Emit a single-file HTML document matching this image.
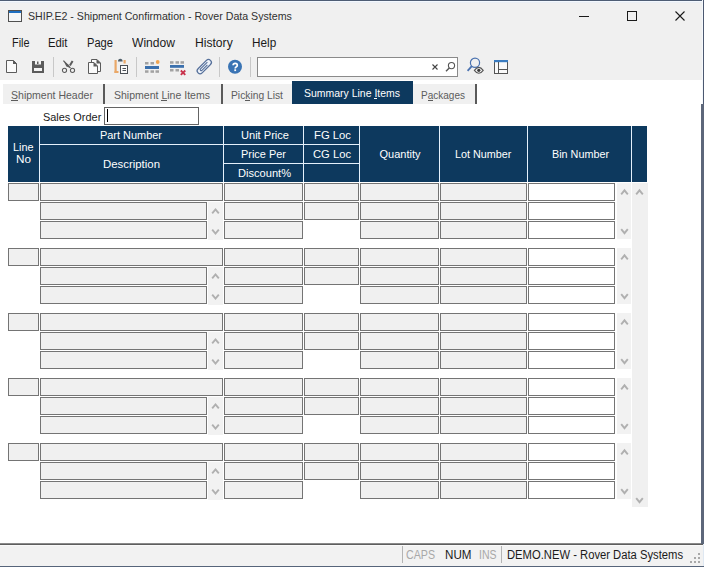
<!DOCTYPE html>
<html><head><meta charset="utf-8"><style>
html,body{margin:0;padding:0;}
body{width:704px;height:567px;position:relative;overflow:hidden;background:#fff;font-family:"Liberation Sans",sans-serif;}
.a{position:absolute;box-sizing:border-box;}
.t{position:absolute;white-space:nowrap;transform-origin:0 0;}
svg.a{overflow:visible;}
</style></head><body>
<div class="a" style="left:0px;top:0px;width:704px;height:80px;background:#f0f0f0;"></div>
<div class="a" style="left:0px;top:0px;width:704px;height:1px;background:#4e5d74;"></div>
<div class="a" style="left:0px;top:1px;width:704px;height:1px;background:#f3f8fe;"></div>
<div class="a" style="left:0px;top:2px;width:704px;height:1px;background:#eaeef4;"></div>
<svg class="a" style="left:8px;top:10px" width="15" height="13" viewBox="0 0 15 13"><rect x="0.5" y="0.5" width="13" height="11" fill="#f4f6f8" stroke="#505050" stroke-width="1"/><rect x="1" y="1" width="12" height="2" fill="#1d6fc2"/></svg>
<div class="t" style="left:28.00px;top:10.04px;font-size:11px;line-height:12.64px;color:#303030;transform:scaleX(0.9663);">SHIP.E2 - Shipment Confirmation - Rover Data Systems</div>
<div class="a" style="left:579px;top:16px;width:10px;height:1px;background:#1a1a1a;"></div>
<div class="a" style="left:627px;top:11px;width:10px;height:10px;box-shadow:inset 0 0 0 1px #1a1a1a;"></div>
<svg class="a" style="left:675px;top:11px" width="10" height="10" viewBox="0 0 10 10"><path d="M0.5 0.5L9.5 9.5M9.5 0.5L0.5 9.5" stroke="#1a1a1a" stroke-width="1.1"/></svg>
<div class="t" style="left:11.50px;top:37.14px;font-size:12px;line-height:13.79px;color:#1a1a1a;transform:scaleX(0.9047);">File</div>
<div class="t" style="left:48.00px;top:37.14px;font-size:12px;line-height:13.79px;color:#1a1a1a;transform:scaleX(0.9433);">Edit</div>
<div class="t" style="left:87.00px;top:37.14px;font-size:12px;line-height:13.79px;color:#1a1a1a;transform:scaleX(0.9281);">Page</div>
<div class="t" style="left:132.00px;top:37.14px;font-size:12px;line-height:13.79px;color:#1a1a1a;transform:scaleX(1.0073);">Window</div>
<div class="t" style="left:195.00px;top:37.14px;font-size:12px;line-height:13.79px;color:#1a1a1a;transform:scaleX(1.0095);">History</div>
<div class="t" style="left:251.80px;top:37.14px;font-size:12px;line-height:13.79px;color:#1a1a1a;transform:scaleX(0.9803);">Help</div>
<div class="a" style="left:53px;top:57px;width:1px;height:20px;background:#c8c8c8;"></div>
<div class="a" style="left:136px;top:57px;width:1px;height:20px;background:#c8c8c8;"></div>
<div class="a" style="left:219px;top:57px;width:1px;height:20px;background:#c8c8c8;"></div>
<div class="a" style="left:250px;top:57px;width:1px;height:20px;background:#c8c8c8;"></div>
<div class="a" style="left:257px;top:57px;width:201px;height:20px;background:#fff;box-shadow:inset 0 0 0 1px #8a8a8a;"></div>
<svg class="a" style="left:5px;top:59px" width="14" height="15" viewBox="0 0 14 15"><path d="M1.5 1.5H8.5L11.5 4.5V13.5H1.5Z" fill="#fafafa" stroke="#5b5b5b" stroke-width="1"/><path d="M8 1V5H12Z" fill="#5b5b5b"/></svg>
<svg class="a" style="left:32px;top:60px" width="13" height="14" viewBox="0 0 13 14"><path d="M0 1H12V13H0Z" fill="#5b5b5b"/><rect x="3" y="1" width="6" height="3.5" fill="#f4f4f4"/><rect x="5" y="1.5" width="1.5" height="2.5" fill="#5b5b5b"/><rect x="2" y="8" width="8" height="3" fill="#f4f4f4"/></svg>
<svg class="a" style="left:58px;top:56px" width="22" height="20" viewBox="0 0 22 20"><path d="M5.4 4.6L12.4 11.9" stroke="#5b5b5b" stroke-width="1.3"/><path d="M6 5.8L10.2 8.6L12.3 12L8.4 10.6Z" fill="#5b5b5b"/><path d="M14.6 5.1L11.9 9.6" stroke="#5b5b5b" stroke-width="2"/><circle cx="6.5" cy="14.3" r="2.1" fill="none" stroke="#5b5b5b" stroke-width="1.05"/><circle cx="14.5" cy="14.3" r="2.1" fill="none" stroke="#5b5b5b" stroke-width="1.05"/></svg>
<svg class="a" style="left:87px;top:58px" width="15" height="17" viewBox="0 0 15 17"><path d="M4.5 1.5H10L13.5 5V13.5H4.5Z" fill="#fafafa" stroke="#5b5b5b" stroke-width="1"/><path d="M9.5 1V5.5H14Z" fill="#5b5b5b"/><path d="M1.5 4.5H7L10.5 8V15.5H1.5Z" fill="#fafafa" stroke="#5b5b5b" stroke-width="1"/><path d="M6.5 4V8.5H11Z" fill="#5b5b5b"/></svg>
<svg class="a" style="left:113px;top:58px" width="16" height="17" viewBox="0 0 16 17"><rect x="1.5" y="2" width="2.2" height="13" fill="#eaa868"/><rect x="1.5" y="13" width="4" height="2" fill="#eaa868"/><rect x="10.5" y="2" width="2.2" height="3.5" fill="#eaa868"/><path d="M5 3.5Q5 0.8 7.3 0.8Q9.6 0.8 9.6 3.5Z" fill="#4f5f6a"/><rect x="7.5" y="7.5" width="7" height="8" fill="#fafafa" stroke="#4a4f55" stroke-width="1"/><rect x="9.5" y="10" width="3.5" height="1" fill="#4a4f55"/><rect x="9.5" y="12" width="3.5" height="1" fill="#4a4f55"/></svg>
<svg class="a" style="left:144px;top:60px" width="17" height="14" viewBox="0 0 17 14"><rect x="1" y="2" width="3.5" height="2.5" fill="#a2a2a2"/><rect x="6.5" y="2" width="3.5" height="2.5" fill="#a2a2a2"/><circle cx="13.7" cy="2" r="1.9" fill="#f0a552"/><rect x="1" y="6" width="14" height="3" fill="#3b70ad"/><rect x="1" y="10.3" width="3.5" height="2.5" fill="#a2a2a2"/><rect x="6.5" y="10.3" width="3.5" height="2.5" fill="#a2a2a2"/><rect x="11.5" y="10.3" width="3.5" height="2.5" fill="#a2a2a2"/></svg>
<svg class="a" style="left:169px;top:60px" width="18" height="16" viewBox="0 0 18 16"><rect x="1" y="1.2" width="3.5" height="2.5" fill="#a2a2a2"/><rect x="6.5" y="1.2" width="3.5" height="2.5" fill="#a2a2a2"/><rect x="11.5" y="1.2" width="3.5" height="2.5" fill="#a2a2a2"/><rect x="1" y="5" width="14" height="2.8" fill="#3b70ad"/><rect x="1" y="9" width="3.5" height="2.5" fill="#a2a2a2"/><rect x="6.5" y="9" width="3.5" height="2.5" fill="#a2a2a2"/><path d="M11.8 10.5L16.3 14.8M16.3 10.5L11.8 14.8" stroke="#c8304a" stroke-width="1.8"/></svg>
<svg class="a" style="left:192px;top:56px" width="24" height="22" viewBox="0 0 24 22"><g transform="translate(12.2,10.7) rotate(-45)"><path d="M-5.8 2.9H6A2.9 2.9 0 0 0 6 -2.9H-5.8A2.9 2.9 0 0 0 -5.8 2.9Z" fill="#eef3fa" stroke="#56709a" stroke-width="1.25"/><path d="M5.5 -1H-4.2A1 1 0 0 0 -4.2 1H3.5" fill="none" stroke="#56709a" stroke-width="1.1"/></g></svg>
<svg class="a" style="left:227px;top:59px" width="16" height="16" viewBox="0 0 16 16"><circle cx="8" cy="7.8" r="7" fill="#3a74b4"/><path d="M6.1 6.2Q6.1 4.4 8.2 4.4Q10.3 4.4 10.3 6.2Q10.3 7.3 9.1 7.9Q8.2 8.4 8.2 9.6" fill="none" stroke="#fff" stroke-width="1.7"/><rect x="7.3" y="10.3" width="1.8" height="1.8" fill="#fff"/></svg>
<svg class="a" style="left:429px;top:61px" width="12" height="12" viewBox="0 0 12 12"><path d="M3.5 3.5L8.5 8.5M8.5 3.5L3.5 8.5" stroke="#444" stroke-width="1.1"/></svg>
<svg class="a" style="left:444px;top:61px" width="12" height="12" viewBox="0 0 12 12"><circle cx="7.5" cy="4.6" r="3.1" fill="none" stroke="#555" stroke-width="1.1"/><path d="M5.3 6.9L2 10.3" stroke="#555" stroke-width="1.4"/></svg>
<svg class="a" style="left:465px;top:57px" width="20" height="18" viewBox="0 0 20 18"><circle cx="10" cy="5.8" r="4.6" fill="none" stroke="#4a72b0" stroke-width="1.2"/><path d="M6.8 9.2L2.6 13.8" stroke="#4a72b0" stroke-width="1.8"/><path d="M9.4 13.3Q13.8 7.4 18.2 13.3Q13.8 19.2 9.4 13.3Z" fill="#f4f4f4" stroke="#555" stroke-width="1.1"/><circle cx="13.8" cy="13.3" r="1.6" fill="#3a3a3a"/></svg>
<svg class="a" style="left:493px;top:59px" width="16" height="16" viewBox="0 0 16 16"><rect x="1.5" y="1.5" width="13" height="13" fill="#fafafa" stroke="#555" stroke-width="1"/><rect x="1" y="1" width="14" height="2.2" fill="#3b7cc0"/><path d="M5.5 3V14.5M5.5 10.5H14.5" stroke="#555" stroke-width="1"/></svg>
<div class="a" style="left:0px;top:80px;width:703px;height:463px;background:#fff;"></div>
<div class="a" style="left:3px;top:84px;width:100px;height:20px;background:#f0f0f0;"></div>
<div class="t" style="left:11.00px;top:89.05px;font-size:11px;line-height:12.64px;color:#5c5c5c;transform:scaleX(0.9573);">Shipment Header</div>
<div class="a" style="left:11.00px;top:100px;width:7.03px;height:1px;background:#5c5c5c"></div>
<div class="a" style="left:105px;top:84px;width:116px;height:20px;background:#f0f0f0;"></div>
<div class="t" style="left:114.00px;top:89.05px;font-size:11px;line-height:12.64px;color:#5c5c5c;transform:scaleX(0.9567);">Shipment Line Items</div>
<div class="a" style="left:161.42px;top:100px;width:5.86px;height:1px;background:#5c5c5c"></div>
<div class="a" style="left:223px;top:84px;width:69px;height:20px;background:#f0f0f0;"></div>
<div class="t" style="left:231.00px;top:89.05px;font-size:11px;line-height:12.64px;color:#5c5c5c;transform:scaleX(0.9343);">Picking List</div>
<div class="a" style="left:245.28px;top:100px;width:5.14px;height:1px;background:#5c5c5c"></div>
<div class="a" style="left:413px;top:84px;width:63px;height:20px;background:#f0f0f0;"></div>
<div class="t" style="left:421.00px;top:89.05px;font-size:11px;line-height:12.64px;color:#5c5c5c;transform:scaleX(0.9101);">Packages</div>
<div class="a" style="left:427.68px;top:100px;width:5.57px;height:1px;background:#5c5c5c"></div>
<div class="a" style="left:103px;top:84px;width:2px;height:20px;background:#5a5a5a;"></div>
<div class="a" style="left:221px;top:84px;width:2px;height:20px;background:#5a5a5a;"></div>
<div class="a" style="left:475px;top:84px;width:2px;height:20px;background:#5a5a5a;"></div>
<div class="a" style="left:292px;top:81px;width:121px;height:23px;background:#0d395e;"></div>
<div class="t" style="left:303.50px;top:87.05px;font-size:11px;line-height:12.64px;color:#ffffff;transform:scaleX(0.9514);">Summary Line Items</div>
<div class="a" style="left:373.90px;top:98px;width:2.91px;height:1px;background:#ffffff"></div>
<div class="t" style="left:42.50px;top:111.05px;font-size:11px;line-height:12.64px;color:#1a1a1a;transform:scaleX(0.9929);">Sales Order</div>
<div class="a" style="left:104px;top:107px;width:95px;height:18px;background:#fff;box-shadow:inset 0 0 0 1px #646464;"></div>
<div class="a" style="left:107px;top:109px;width:1px;height:13px;background:#000;"></div>
<div class="a" style="left:8px;top:126px;width:639px;height:56px;background:#0d395e;"></div>
<div class="a" style="left:39px;top:126px;width:1px;height:56px;background:#e4f0fb;"></div>
<div class="a" style="left:223px;top:126px;width:1px;height:56px;background:#e4f0fb;"></div>
<div class="a" style="left:303px;top:126px;width:1px;height:56px;background:#e4f0fb;"></div>
<div class="a" style="left:359px;top:126px;width:1px;height:56px;background:#e4f0fb;"></div>
<div class="a" style="left:439px;top:126px;width:1px;height:56px;background:#e4f0fb;"></div>
<div class="a" style="left:527px;top:126px;width:1px;height:56px;background:#e4f0fb;"></div>
<div class="a" style="left:631px;top:126px;width:1px;height:56px;background:#e4f0fb;"></div>
<div class="a" style="left:40px;top:144px;width:263px;height:1px;background:#e4f0fb;"></div>
<div class="a" style="left:304px;top:144px;width:55px;height:1px;background:#e4f0fb;"></div>
<div class="a" style="left:224px;top:163px;width:79px;height:1px;background:#e4f0fb;"></div>
<div class="a" style="left:304px;top:163px;width:55px;height:1px;background:#e4f0fb;"></div>
<div class="t" style="left:13.45px;top:141.34px;font-size:11px;line-height:12.64px;color:#ffffff;transform:scaleX(0.9850);">Line</div>
<div class="t" style="left:16.00px;top:153.04px;font-size:11px;line-height:12.64px;color:#ffffff;transform:scaleX(1.0667);">No</div>
<div class="t" style="left:100.00px;top:129.04px;font-size:11px;line-height:12.64px;color:#ffffff;transform:scaleX(0.9940);">Part Number</div>
<div class="t" style="left:102.50px;top:158.04px;font-size:11px;line-height:12.64px;color:#ffffff;transform:scaleX(1.0358);">Description</div>
<div class="t" style="left:240.70px;top:129.04px;font-size:11px;line-height:12.64px;color:#ffffff;transform:scaleX(1.0066);">Unit Price</div>
<div class="t" style="left:241.30px;top:148.04px;font-size:11px;line-height:12.64px;color:#ffffff;transform:scaleX(0.9945);">Price Per</div>
<div class="t" style="left:237.50px;top:167.04px;font-size:11px;line-height:12.64px;color:#ffffff;transform:scaleX(1.0077);">Discount%</div>
<div class="t" style="left:314.10px;top:129.04px;font-size:11px;line-height:12.64px;color:#ffffff;transform:scaleX(1.0251);">FG Loc</div>
<div class="t" style="left:313.00px;top:148.04px;font-size:11px;line-height:12.64px;color:#ffffff;transform:scaleX(1.0184);">CG Loc</div>
<div class="t" style="left:379.50px;top:148.04px;font-size:11px;line-height:12.64px;color:#ffffff;">Quantity</div>
<div class="t" style="left:455.25px;top:148.04px;font-size:11px;line-height:12.64px;color:#ffffff;transform:scaleX(0.9826);">Lot Number</div>
<div class="t" style="left:551.50px;top:148.04px;font-size:11px;line-height:12.64px;color:#ffffff;transform:scaleX(0.9812);">Bin Number</div>
<div class="a" style="left:8px;top:183px;width:31px;height:18px;background:#f0f0f0;box-shadow:inset 0 0 0 1px #747474;"></div>
<div class="a" style="left:40px;top:183px;width:183px;height:18px;background:#f0f0f0;box-shadow:inset 0 0 0 1px #747474;"></div>
<div class="a" style="left:224px;top:183px;width:79px;height:18px;background:#f0f0f0;box-shadow:inset 0 0 0 1px #747474;"></div>
<div class="a" style="left:304px;top:183px;width:55px;height:18px;background:#f0f0f0;box-shadow:inset 0 0 0 1px #747474;"></div>
<div class="a" style="left:360px;top:183px;width:79px;height:18px;background:#f0f0f0;box-shadow:inset 0 0 0 1px #747474;"></div>
<div class="a" style="left:440px;top:183px;width:87px;height:18px;background:#f0f0f0;box-shadow:inset 0 0 0 1px #747474;"></div>
<div class="a" style="left:528px;top:183px;width:87px;height:18px;background:#fff;box-shadow:inset 0 0 0 1px #747474;"></div>
<div class="a" style="left:40px;top:202px;width:167px;height:18px;background:#f0f0f0;box-shadow:inset 0 0 0 1px #747474;"></div>
<div class="a" style="left:224px;top:202px;width:79px;height:18px;background:#f0f0f0;box-shadow:inset 0 0 0 1px #747474;"></div>
<div class="a" style="left:304px;top:202px;width:55px;height:18px;background:#f0f0f0;box-shadow:inset 0 0 0 1px #747474;"></div>
<div class="a" style="left:360px;top:202px;width:79px;height:18px;background:#f0f0f0;box-shadow:inset 0 0 0 1px #747474;"></div>
<div class="a" style="left:440px;top:202px;width:87px;height:18px;background:#f0f0f0;box-shadow:inset 0 0 0 1px #747474;"></div>
<div class="a" style="left:528px;top:202px;width:87px;height:18px;background:#fff;box-shadow:inset 0 0 0 1px #747474;"></div>
<div class="a" style="left:40px;top:221px;width:167px;height:18px;background:#f0f0f0;box-shadow:inset 0 0 0 1px #747474;"></div>
<div class="a" style="left:224px;top:221px;width:79px;height:18px;background:#f0f0f0;box-shadow:inset 0 0 0 1px #747474;"></div>
<div class="a" style="left:360px;top:221px;width:79px;height:18px;background:#f0f0f0;box-shadow:inset 0 0 0 1px #747474;"></div>
<div class="a" style="left:440px;top:221px;width:87px;height:18px;background:#f0f0f0;box-shadow:inset 0 0 0 1px #747474;"></div>
<div class="a" style="left:528px;top:221px;width:87px;height:18px;background:#fff;box-shadow:inset 0 0 0 1px #747474;"></div>
<div class="a" style="left:208px;top:202px;width:15px;height:38px;background:#f2f2f2;"></div>
<svg class="a" style="left:0;top:0" width="704" height="567"><path d="M212.20 213.40L215.50 209.40L218.80 213.40" fill="none" stroke="#b0b0b0" stroke-width="1.9"/></svg>
<svg class="a" style="left:0;top:0" width="704" height="567"><path d="M212.20 229.60L215.50 233.60L218.80 229.60" fill="none" stroke="#b0b0b0" stroke-width="1.9"/></svg>
<div class="a" style="left:617px;top:183px;width:14px;height:56px;background:#f2f2f2;"></div>
<svg class="a" style="left:0;top:0" width="704" height="567"><path d="M621.20 194.30L624.50 190.30L627.80 194.30" fill="none" stroke="#b0b0b0" stroke-width="1.9"/></svg>
<svg class="a" style="left:0;top:0" width="704" height="567"><path d="M621.20 229.20L624.50 233.20L627.80 229.20" fill="none" stroke="#b0b0b0" stroke-width="1.9"/></svg>
<div class="a" style="left:8px;top:248px;width:31px;height:18px;background:#f0f0f0;box-shadow:inset 0 0 0 1px #747474;"></div>
<div class="a" style="left:40px;top:248px;width:183px;height:18px;background:#f0f0f0;box-shadow:inset 0 0 0 1px #747474;"></div>
<div class="a" style="left:224px;top:248px;width:79px;height:18px;background:#f0f0f0;box-shadow:inset 0 0 0 1px #747474;"></div>
<div class="a" style="left:304px;top:248px;width:55px;height:18px;background:#f0f0f0;box-shadow:inset 0 0 0 1px #747474;"></div>
<div class="a" style="left:360px;top:248px;width:79px;height:18px;background:#f0f0f0;box-shadow:inset 0 0 0 1px #747474;"></div>
<div class="a" style="left:440px;top:248px;width:87px;height:18px;background:#f0f0f0;box-shadow:inset 0 0 0 1px #747474;"></div>
<div class="a" style="left:528px;top:248px;width:87px;height:18px;background:#fff;box-shadow:inset 0 0 0 1px #747474;"></div>
<div class="a" style="left:40px;top:267px;width:167px;height:18px;background:#f0f0f0;box-shadow:inset 0 0 0 1px #747474;"></div>
<div class="a" style="left:224px;top:267px;width:79px;height:18px;background:#f0f0f0;box-shadow:inset 0 0 0 1px #747474;"></div>
<div class="a" style="left:304px;top:267px;width:55px;height:18px;background:#f0f0f0;box-shadow:inset 0 0 0 1px #747474;"></div>
<div class="a" style="left:360px;top:267px;width:79px;height:18px;background:#f0f0f0;box-shadow:inset 0 0 0 1px #747474;"></div>
<div class="a" style="left:440px;top:267px;width:87px;height:18px;background:#f0f0f0;box-shadow:inset 0 0 0 1px #747474;"></div>
<div class="a" style="left:528px;top:267px;width:87px;height:18px;background:#fff;box-shadow:inset 0 0 0 1px #747474;"></div>
<div class="a" style="left:40px;top:286px;width:167px;height:18px;background:#f0f0f0;box-shadow:inset 0 0 0 1px #747474;"></div>
<div class="a" style="left:224px;top:286px;width:79px;height:18px;background:#f0f0f0;box-shadow:inset 0 0 0 1px #747474;"></div>
<div class="a" style="left:360px;top:286px;width:79px;height:18px;background:#f0f0f0;box-shadow:inset 0 0 0 1px #747474;"></div>
<div class="a" style="left:440px;top:286px;width:87px;height:18px;background:#f0f0f0;box-shadow:inset 0 0 0 1px #747474;"></div>
<div class="a" style="left:528px;top:286px;width:87px;height:18px;background:#fff;box-shadow:inset 0 0 0 1px #747474;"></div>
<div class="a" style="left:208px;top:267px;width:15px;height:38px;background:#f2f2f2;"></div>
<svg class="a" style="left:0;top:0" width="704" height="567"><path d="M212.20 278.40L215.50 274.40L218.80 278.40" fill="none" stroke="#b0b0b0" stroke-width="1.9"/></svg>
<svg class="a" style="left:0;top:0" width="704" height="567"><path d="M212.20 294.60L215.50 298.60L218.80 294.60" fill="none" stroke="#b0b0b0" stroke-width="1.9"/></svg>
<div class="a" style="left:617px;top:248px;width:14px;height:56px;background:#f2f2f2;"></div>
<svg class="a" style="left:0;top:0" width="704" height="567"><path d="M621.20 259.30L624.50 255.30L627.80 259.30" fill="none" stroke="#b0b0b0" stroke-width="1.9"/></svg>
<svg class="a" style="left:0;top:0" width="704" height="567"><path d="M621.20 294.20L624.50 298.20L627.80 294.20" fill="none" stroke="#b0b0b0" stroke-width="1.9"/></svg>
<div class="a" style="left:8px;top:313px;width:31px;height:18px;background:#f0f0f0;box-shadow:inset 0 0 0 1px #747474;"></div>
<div class="a" style="left:40px;top:313px;width:183px;height:18px;background:#f0f0f0;box-shadow:inset 0 0 0 1px #747474;"></div>
<div class="a" style="left:224px;top:313px;width:79px;height:18px;background:#f0f0f0;box-shadow:inset 0 0 0 1px #747474;"></div>
<div class="a" style="left:304px;top:313px;width:55px;height:18px;background:#f0f0f0;box-shadow:inset 0 0 0 1px #747474;"></div>
<div class="a" style="left:360px;top:313px;width:79px;height:18px;background:#f0f0f0;box-shadow:inset 0 0 0 1px #747474;"></div>
<div class="a" style="left:440px;top:313px;width:87px;height:18px;background:#f0f0f0;box-shadow:inset 0 0 0 1px #747474;"></div>
<div class="a" style="left:528px;top:313px;width:87px;height:18px;background:#fff;box-shadow:inset 0 0 0 1px #747474;"></div>
<div class="a" style="left:40px;top:332px;width:167px;height:18px;background:#f0f0f0;box-shadow:inset 0 0 0 1px #747474;"></div>
<div class="a" style="left:224px;top:332px;width:79px;height:18px;background:#f0f0f0;box-shadow:inset 0 0 0 1px #747474;"></div>
<div class="a" style="left:304px;top:332px;width:55px;height:18px;background:#f0f0f0;box-shadow:inset 0 0 0 1px #747474;"></div>
<div class="a" style="left:360px;top:332px;width:79px;height:18px;background:#f0f0f0;box-shadow:inset 0 0 0 1px #747474;"></div>
<div class="a" style="left:440px;top:332px;width:87px;height:18px;background:#f0f0f0;box-shadow:inset 0 0 0 1px #747474;"></div>
<div class="a" style="left:528px;top:332px;width:87px;height:18px;background:#fff;box-shadow:inset 0 0 0 1px #747474;"></div>
<div class="a" style="left:40px;top:351px;width:167px;height:18px;background:#f0f0f0;box-shadow:inset 0 0 0 1px #747474;"></div>
<div class="a" style="left:224px;top:351px;width:79px;height:18px;background:#f0f0f0;box-shadow:inset 0 0 0 1px #747474;"></div>
<div class="a" style="left:360px;top:351px;width:79px;height:18px;background:#f0f0f0;box-shadow:inset 0 0 0 1px #747474;"></div>
<div class="a" style="left:440px;top:351px;width:87px;height:18px;background:#f0f0f0;box-shadow:inset 0 0 0 1px #747474;"></div>
<div class="a" style="left:528px;top:351px;width:87px;height:18px;background:#fff;box-shadow:inset 0 0 0 1px #747474;"></div>
<div class="a" style="left:208px;top:332px;width:15px;height:38px;background:#f2f2f2;"></div>
<svg class="a" style="left:0;top:0" width="704" height="567"><path d="M212.20 343.40L215.50 339.40L218.80 343.40" fill="none" stroke="#b0b0b0" stroke-width="1.9"/></svg>
<svg class="a" style="left:0;top:0" width="704" height="567"><path d="M212.20 359.60L215.50 363.60L218.80 359.60" fill="none" stroke="#b0b0b0" stroke-width="1.9"/></svg>
<div class="a" style="left:617px;top:313px;width:14px;height:56px;background:#f2f2f2;"></div>
<svg class="a" style="left:0;top:0" width="704" height="567"><path d="M621.20 324.30L624.50 320.30L627.80 324.30" fill="none" stroke="#b0b0b0" stroke-width="1.9"/></svg>
<svg class="a" style="left:0;top:0" width="704" height="567"><path d="M621.20 359.20L624.50 363.20L627.80 359.20" fill="none" stroke="#b0b0b0" stroke-width="1.9"/></svg>
<div class="a" style="left:8px;top:378px;width:31px;height:18px;background:#f0f0f0;box-shadow:inset 0 0 0 1px #747474;"></div>
<div class="a" style="left:40px;top:378px;width:183px;height:18px;background:#f0f0f0;box-shadow:inset 0 0 0 1px #747474;"></div>
<div class="a" style="left:224px;top:378px;width:79px;height:18px;background:#f0f0f0;box-shadow:inset 0 0 0 1px #747474;"></div>
<div class="a" style="left:304px;top:378px;width:55px;height:18px;background:#f0f0f0;box-shadow:inset 0 0 0 1px #747474;"></div>
<div class="a" style="left:360px;top:378px;width:79px;height:18px;background:#f0f0f0;box-shadow:inset 0 0 0 1px #747474;"></div>
<div class="a" style="left:440px;top:378px;width:87px;height:18px;background:#f0f0f0;box-shadow:inset 0 0 0 1px #747474;"></div>
<div class="a" style="left:528px;top:378px;width:87px;height:18px;background:#fff;box-shadow:inset 0 0 0 1px #747474;"></div>
<div class="a" style="left:40px;top:397px;width:167px;height:18px;background:#f0f0f0;box-shadow:inset 0 0 0 1px #747474;"></div>
<div class="a" style="left:224px;top:397px;width:79px;height:18px;background:#f0f0f0;box-shadow:inset 0 0 0 1px #747474;"></div>
<div class="a" style="left:304px;top:397px;width:55px;height:18px;background:#f0f0f0;box-shadow:inset 0 0 0 1px #747474;"></div>
<div class="a" style="left:360px;top:397px;width:79px;height:18px;background:#f0f0f0;box-shadow:inset 0 0 0 1px #747474;"></div>
<div class="a" style="left:440px;top:397px;width:87px;height:18px;background:#f0f0f0;box-shadow:inset 0 0 0 1px #747474;"></div>
<div class="a" style="left:528px;top:397px;width:87px;height:18px;background:#fff;box-shadow:inset 0 0 0 1px #747474;"></div>
<div class="a" style="left:40px;top:416px;width:167px;height:18px;background:#f0f0f0;box-shadow:inset 0 0 0 1px #747474;"></div>
<div class="a" style="left:224px;top:416px;width:79px;height:18px;background:#f0f0f0;box-shadow:inset 0 0 0 1px #747474;"></div>
<div class="a" style="left:360px;top:416px;width:79px;height:18px;background:#f0f0f0;box-shadow:inset 0 0 0 1px #747474;"></div>
<div class="a" style="left:440px;top:416px;width:87px;height:18px;background:#f0f0f0;box-shadow:inset 0 0 0 1px #747474;"></div>
<div class="a" style="left:528px;top:416px;width:87px;height:18px;background:#fff;box-shadow:inset 0 0 0 1px #747474;"></div>
<div class="a" style="left:208px;top:397px;width:15px;height:38px;background:#f2f2f2;"></div>
<svg class="a" style="left:0;top:0" width="704" height="567"><path d="M212.20 408.40L215.50 404.40L218.80 408.40" fill="none" stroke="#b0b0b0" stroke-width="1.9"/></svg>
<svg class="a" style="left:0;top:0" width="704" height="567"><path d="M212.20 424.60L215.50 428.60L218.80 424.60" fill="none" stroke="#b0b0b0" stroke-width="1.9"/></svg>
<div class="a" style="left:617px;top:378px;width:14px;height:56px;background:#f2f2f2;"></div>
<svg class="a" style="left:0;top:0" width="704" height="567"><path d="M621.20 389.30L624.50 385.30L627.80 389.30" fill="none" stroke="#b0b0b0" stroke-width="1.9"/></svg>
<svg class="a" style="left:0;top:0" width="704" height="567"><path d="M621.20 424.20L624.50 428.20L627.80 424.20" fill="none" stroke="#b0b0b0" stroke-width="1.9"/></svg>
<div class="a" style="left:8px;top:443px;width:31px;height:18px;background:#f0f0f0;box-shadow:inset 0 0 0 1px #747474;"></div>
<div class="a" style="left:40px;top:443px;width:183px;height:18px;background:#f0f0f0;box-shadow:inset 0 0 0 1px #747474;"></div>
<div class="a" style="left:224px;top:443px;width:79px;height:18px;background:#f0f0f0;box-shadow:inset 0 0 0 1px #747474;"></div>
<div class="a" style="left:304px;top:443px;width:55px;height:18px;background:#f0f0f0;box-shadow:inset 0 0 0 1px #747474;"></div>
<div class="a" style="left:360px;top:443px;width:79px;height:18px;background:#f0f0f0;box-shadow:inset 0 0 0 1px #747474;"></div>
<div class="a" style="left:440px;top:443px;width:87px;height:18px;background:#f0f0f0;box-shadow:inset 0 0 0 1px #747474;"></div>
<div class="a" style="left:528px;top:443px;width:87px;height:18px;background:#fff;box-shadow:inset 0 0 0 1px #747474;"></div>
<div class="a" style="left:40px;top:462px;width:167px;height:18px;background:#f0f0f0;box-shadow:inset 0 0 0 1px #747474;"></div>
<div class="a" style="left:224px;top:462px;width:79px;height:18px;background:#f0f0f0;box-shadow:inset 0 0 0 1px #747474;"></div>
<div class="a" style="left:304px;top:462px;width:55px;height:18px;background:#f0f0f0;box-shadow:inset 0 0 0 1px #747474;"></div>
<div class="a" style="left:360px;top:462px;width:79px;height:18px;background:#f0f0f0;box-shadow:inset 0 0 0 1px #747474;"></div>
<div class="a" style="left:440px;top:462px;width:87px;height:18px;background:#f0f0f0;box-shadow:inset 0 0 0 1px #747474;"></div>
<div class="a" style="left:528px;top:462px;width:87px;height:18px;background:#fff;box-shadow:inset 0 0 0 1px #747474;"></div>
<div class="a" style="left:40px;top:481px;width:167px;height:18px;background:#f0f0f0;box-shadow:inset 0 0 0 1px #747474;"></div>
<div class="a" style="left:224px;top:481px;width:79px;height:18px;background:#f0f0f0;box-shadow:inset 0 0 0 1px #747474;"></div>
<div class="a" style="left:360px;top:481px;width:79px;height:18px;background:#f0f0f0;box-shadow:inset 0 0 0 1px #747474;"></div>
<div class="a" style="left:440px;top:481px;width:87px;height:18px;background:#f0f0f0;box-shadow:inset 0 0 0 1px #747474;"></div>
<div class="a" style="left:528px;top:481px;width:87px;height:18px;background:#fff;box-shadow:inset 0 0 0 1px #747474;"></div>
<div class="a" style="left:208px;top:462px;width:15px;height:38px;background:#f2f2f2;"></div>
<svg class="a" style="left:0;top:0" width="704" height="567"><path d="M212.20 473.40L215.50 469.40L218.80 473.40" fill="none" stroke="#b0b0b0" stroke-width="1.9"/></svg>
<svg class="a" style="left:0;top:0" width="704" height="567"><path d="M212.20 489.60L215.50 493.60L218.80 489.60" fill="none" stroke="#b0b0b0" stroke-width="1.9"/></svg>
<div class="a" style="left:617px;top:443px;width:14px;height:56px;background:#f2f2f2;"></div>
<svg class="a" style="left:0;top:0" width="704" height="567"><path d="M621.20 454.30L624.50 450.30L627.80 454.30" fill="none" stroke="#b0b0b0" stroke-width="1.9"/></svg>
<svg class="a" style="left:0;top:0" width="704" height="567"><path d="M621.20 489.20L624.50 493.20L627.80 489.20" fill="none" stroke="#b0b0b0" stroke-width="1.9"/></svg>
<div class="a" style="left:632px;top:183px;width:16px;height:324px;background:#f0f0f0;"></div>
<svg class="a" style="left:0;top:0" width="704" height="567"><path d="M636.20 194.30L639.50 190.30L642.80 194.30" fill="none" stroke="#b0b0b0" stroke-width="1.9"/></svg>
<svg class="a" style="left:0;top:0" width="704" height="567"><path d="M636.20 498.20L639.50 502.20L642.80 498.20" fill="none" stroke="#b0b0b0" stroke-width="1.9"/></svg>
<div class="a" style="left:0px;top:543px;width:703px;height:1px;background:#8a8a8a;"></div>
<div class="a" style="left:0px;top:544px;width:703px;height:1px;background:#5e5e5e;"></div>
<div class="a" style="left:0px;top:545px;width:703px;height:1px;background:#fafafa;"></div>
<div class="a" style="left:0px;top:546px;width:703px;height:20px;background:#f2f2f2;"></div>
<div class="a" style="left:0px;top:566px;width:704px;height:1px;background:#56647a;"></div>
<div class="a" style="left:402px;top:546px;width:1px;height:17px;background:#b4b4b4;"></div>
<div class="a" style="left:501px;top:546px;width:1px;height:17px;background:#b4b4b4;"></div>
<div class="t" style="left:406.00px;top:549.14px;font-size:12px;line-height:13.79px;color:#a8a8a8;transform:scaleX(0.8876);">CAPS</div>
<div class="t" style="left:444.50px;top:549.14px;font-size:12px;line-height:13.79px;color:#1a1a1a;transform:scaleX(0.9691);">NUM</div>
<div class="t" style="left:479.00px;top:549.14px;font-size:12px;line-height:13.79px;color:#a8a8a8;transform:scaleX(0.8750);">INS</div>
<div class="t" style="left:506.80px;top:549.14px;font-size:12px;line-height:13.79px;color:#1a1a1a;transform:scaleX(0.9362);">DEMO.NEW - Rover Data Systems</div>
<div class="a" style="left:698px;top:553px;width:2px;height:2px;background:#a8a8a8;"></div>
<div class="a" style="left:698px;top:557px;width:2px;height:2px;background:#a8a8a8;"></div>
<div class="a" style="left:694px;top:557px;width:2px;height:2px;background:#a8a8a8;"></div>
<div class="a" style="left:698px;top:561px;width:2px;height:2px;background:#a8a8a8;"></div>
<div class="a" style="left:694px;top:561px;width:2px;height:2px;background:#a8a8a8;"></div>
<div class="a" style="left:690px;top:561px;width:2px;height:2px;background:#a8a8a8;"></div>
<div class="a" style="left:702px;top:0px;width:1px;height:104px;background:#f4f8fc;"></div>
<div class="a" style="left:703px;top:0px;width:1px;height:104px;background:#4c5870;"></div>
<div class="a" style="left:701px;top:104px;width:3px;height:440px;background:#5d677a;"></div>
<div class="a" style="left:703px;top:544px;width:1px;height:22px;background:#dfe8f2;"></div>
</body></html>
